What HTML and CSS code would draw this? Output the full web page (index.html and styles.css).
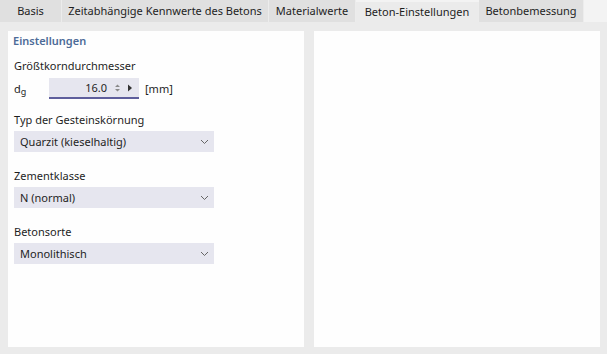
FILE: index.html
```html
<!DOCTYPE html>
<html>
<head>
<meta charset="utf-8">
<link rel="stylesheet" href="styles.css">
</head>
<body>
<div class="tabs">
  <div class="tab t1">Basis</div>
  <div class="tab t2">Zeitabhängige Kennwerte des Betons</div>
  <div class="tab t3">Materialwerte</div>
  <div class="tab t4 active">Beton-Einstellungen</div>
  <div class="tab t5">Betonbemessung</div>
</div>
<div class="area">
  <div class="panel left">
    <div class="title">Einstellungen</div>
    <div class="label first">Größtkorndurchmesser</div>
    <div class="row">
      <div class="sym">d<sub>g</sub></div>
      <div class="spin">
        <span class="val">16.0</span>
        <svg class="updown" width="7" height="10" viewBox="0 0 7 10"><path d="M1 4 L3.5 1.5 L6 4 Z M1 6 L3.5 8.5 L6 6 Z" fill="#8a8a8a"/></svg>
        <svg class="arrow" width="6" height="8" viewBox="0 0 6 8"><path d="M1 0.5 L5 4 L1 7.5 Z" fill="#333"/></svg>
      </div>
      <div class="unit">[mm]</div>
    </div>
    <div class="label second">Typ der Gesteinskörnung</div>
    <div class="select"><span>Quarzit (kieselhaltig)</span><svg width="9" height="6" viewBox="0 0 9 6"><path d="M1 1 L4.5 4.5 L8 1" fill="none" stroke="#666" stroke-width="1"/></svg></div>
    <div class="label">Zementklasse</div>
    <div class="select"><span>N (normal)</span><svg width="9" height="6" viewBox="0 0 9 6"><path d="M1 1 L4.5 4.5 L8 1" fill="none" stroke="#666" stroke-width="1"/></svg></div>
    <div class="label">Betonsorte</div>
    <div class="select"><span>Monolithisch</span><svg width="9" height="6" viewBox="0 0 9 6"><path d="M1 1 L4.5 4.5 L8 1" fill="none" stroke="#666" stroke-width="1"/></svg></div>
  </div>
  <div class="panel right"></div>
</div>
</body>
</html>
```
FILE: styles.css
```css
html, body {
  margin: 0;
  padding: 0;
}
body {
  width: 607px;
  height: 354px;
  overflow: hidden;
  background: #f3f3f3;
  font-family: "Noto Sans", sans-serif;
  font-size: 11px;
  color: #1e1e1e;
  display: flex;
  flex-direction: column;
}
.tabs {
  display: flex;
  height: 22px;
  flex: none;
}
.tab {
  background: #e0e0e0;
  line-height: 22px;
  border-right: 1px solid #ececec;
  white-space: nowrap;
  text-align: center;
  box-sizing: border-box;
}
.t1 { width: 62px; }
.t2 { width: 207px; }
.t3 { width: 87px; }
.t4 { width: 123px; }
.t5 { width: 105px; }
.tab.active {
  background: #ebebeb;
  margin-top: 2px;
  line-height: 20px;
}
.area {
  flex: 1;
  background: #ebebeb;
  padding: 9px 7px 7px 8px;
  display: grid;
  grid-template-columns: 296px 1fr;
  gap: 10px;
}
.panel {
  background: #fefefe;
}
.left {
  padding: 2px 0 0 6px;
}
.title {
  height: 16px;
  line-height: 16px;
  margin-left: -1px;
  color: #4d6b98;
  font-weight: 600;
}
.label {
  height: 16px;
  line-height: 16px;
  margin-top: 16px;
}
.label.first {
  margin-top: 9px;
}
.label.second {
  margin-top: 13px;
}
.row {
  display: flex;
  align-items: center;
  margin-top: 4px;
  height: 21px;
  line-height: 16px;
}
.sym {
  width: 35px;
}
.sym sub {
  font-size: 9px;
  line-height: 0;
  vertical-align: -2px;
}
.spin {
  width: 90px;
  height: 19px;
  box-sizing: content-box;
  background: #e6e6ef;
  border-bottom: 2px solid #5e5e9c;
  display: flex;
  align-items: center;
  justify-content: flex-end;
}
.val {
  margin-right: 7px;
}
.updown {
  margin-right: 6px;
}
.arrow {
  margin-right: 6px;
}
.unit {
  margin-left: 6px;
}
.select {
  width: 200px;
  height: 21px;
  margin-top: 3px;
  background: #e6e6ef;
  display: flex;
  align-items: center;
  justify-content: space-between;
  padding: 0 5px 0 6px;
  box-sizing: border-box;
}
```
